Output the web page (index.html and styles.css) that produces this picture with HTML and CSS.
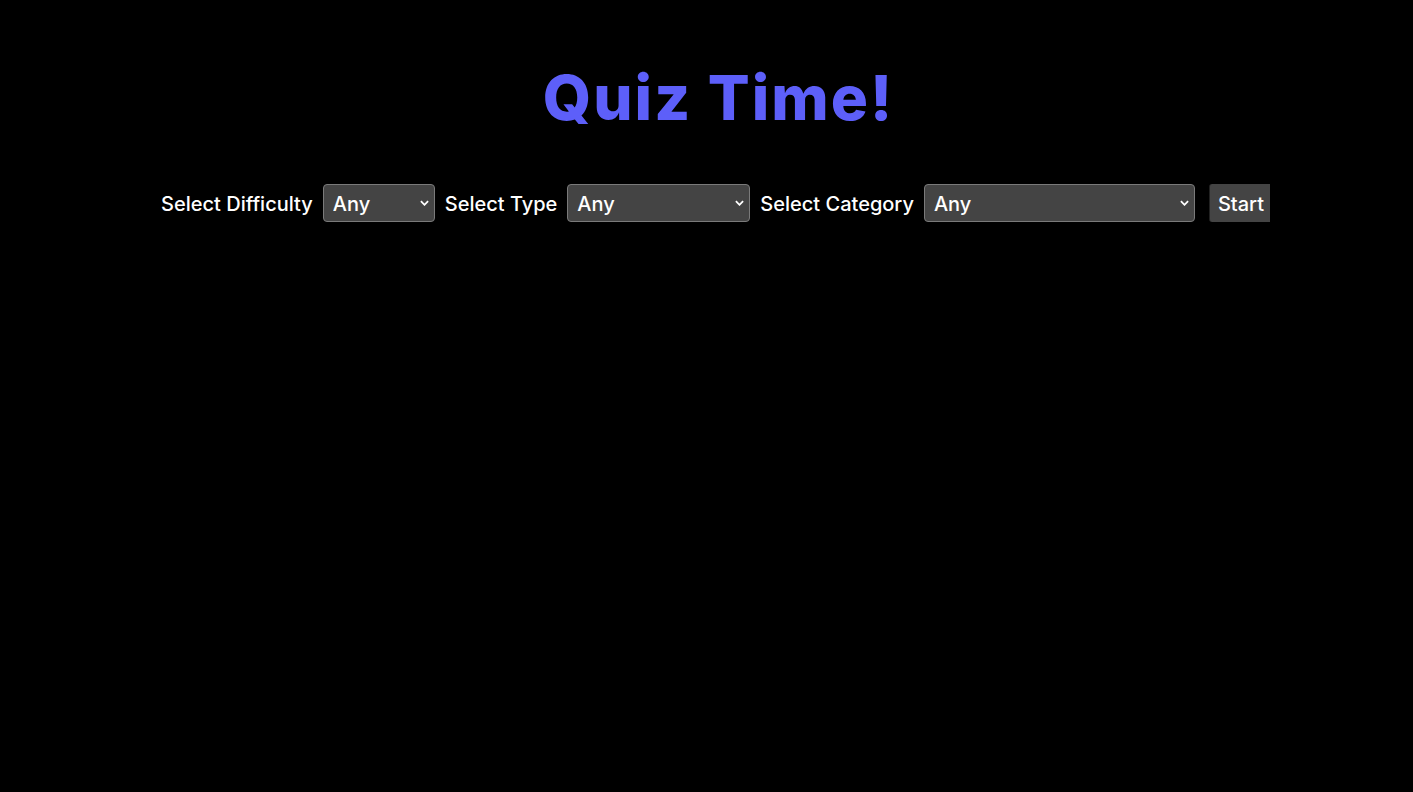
FILE: index.html
```html
<!DOCTYPE html>
<html>
<head>
<meta charset="utf-8">
<title>Quiz Time!</title>
<link rel="stylesheet" href="styles.css">
</head>
<body>
<main class="app">
  <h1 class="title">Quiz Time!</h1>
  <div class="controls">
    <label class="label" for="difficulty">Select Difficulty</label>
    <select id="difficulty" class="select select-difficulty">
      <option>Any</option>
    </select>
    <label class="label" for="type">Select Type</label>
    <select id="type" class="select select-type">
      <option>Any</option>
    </select>
    <label class="label" for="category">Select Category</label>
    <select id="category" class="select select-category">
      <option>Any</option>
    </select>
    <div class="start-wrap"><button class="start">Start</button></div>
  </div>
</main>
</body>
</html>
```
FILE: styles.css
```css
html, body {
  margin: 0;
  padding: 0;
  background: #000;
  height: 100%;
}
body {
  font-family: Inter, "Open Sans", sans-serif;
  color: #fff;
}
.app {
  display: flex;
  flex-direction: column;
  align-items: center;
  padding-top: 56px;
  padding-left: 20px;
}
.title {
  margin: 0;
  padding-left: 4px;
  color: #5d5ff9;
  font-size: 62px;
  font-weight: 800;
  line-height: 84px;
  letter-spacing: 2px;
}
.controls {
  display: flex;
  align-items: center;
  margin-top: 44px;
  height: 38px;
  margin-left: -2px;
}
.label {
  font-size: 20px;
  font-weight: 500;
  margin-right: 10px;
  padding-top: 2px;
}
.select {
  appearance: none;
  -webkit-appearance: none;
  height: 38px;
  box-sizing: border-box;
  background-color: #444;
  color: #fff;
  border: 1px solid #7a7a7a;
  border-radius: 4px;
  font-family: inherit;
  font-size: 20px;
  font-weight: 500;
  padding: 2px 24px 0 9px;
  margin-right: 10px;
  background-image: url("data:image/svg+xml;utf8,<svg xmlns='http://www.w3.org/2000/svg' width='10' height='6' viewBox='0 0 10 6'><path d='M1 1l4 4 4-4' fill='none' stroke='white' stroke-width='2'/></svg>");
  background-repeat: no-repeat;
  background-position: right 5px center;
  background-size: 9px 6px;
}
.select-difficulty { width: 112px; }
.select-type { width: 183px; }
.select-category { width: 271px; margin-right: 14px; }
.start-wrap {
  width: 61px;
  overflow: hidden;
  height: 38px;
}
.start {
  height: 38px;
  background: #444;
  color: #fff;
  border: none;
  border-left: 1px solid #222;
  border-radius: 3px 0 0 3px;
  font-family: inherit;
  font-size: 20px;
  font-weight: 500;
  padding: 2px 8px 0;
  white-space: nowrap;
}
```
